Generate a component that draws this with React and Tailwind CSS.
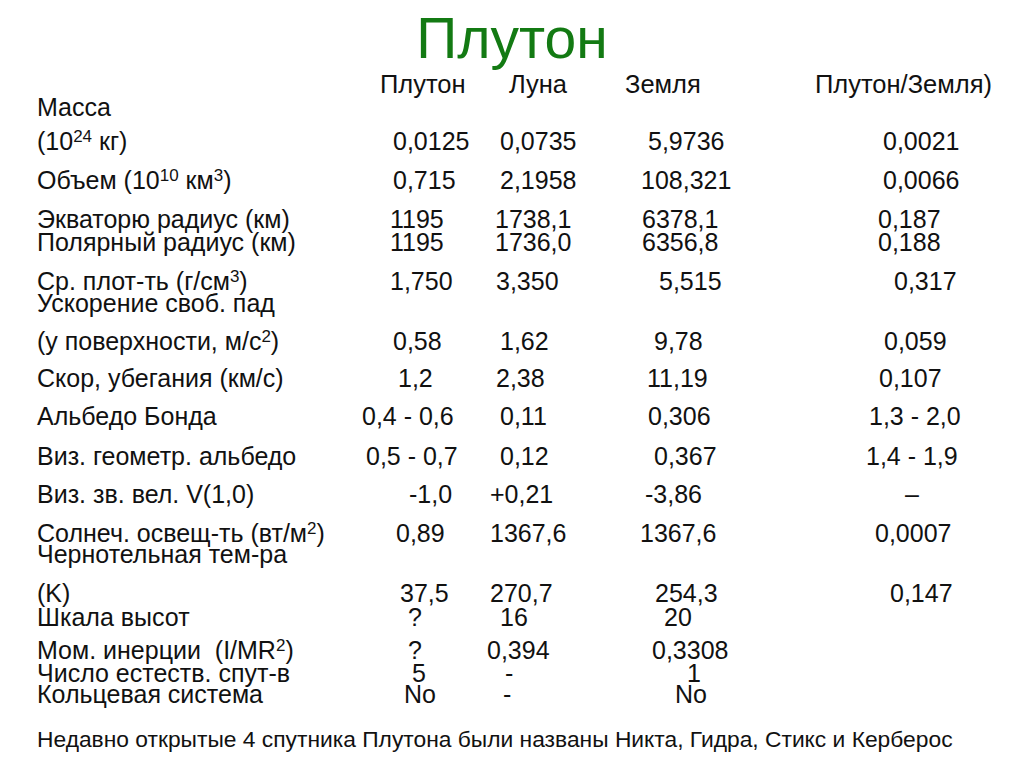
import React from 'react';

function Row({ h, label, cells }) {
  return (
    <div className={`grid grid-cols-[318px_130px_135px_180px_200px] items-start leading-[24px] ${h}`}>
      <div className="whitespace-nowrap">{label}</div>
      {cells.map((c, i) => (
        <div key={i} className={`whitespace-nowrap ${c[0]}`}>{c[1]}</div>
      ))}
    </div>
  );
}

function Sup({ children }) {
  return <sup className="text-[17px]">{children}</sup>;
}

export default function App() {
  return (
    <div className="w-[1024px] h-[767px] bg-white text-[#111] font-['Liberation_Sans',Arial,sans-serif] overflow-hidden">
      <div className="h-[72px] pt-[10px] text-center text-[57px] leading-[57px] text-[#137a13]">Плутон</div>
      <div className="pl-[37px] text-[25px]">
        <Row h="h-[23px] text-[25.5px]" label="" cells={[['pl-[25px]', 'Плутон'], ['pl-[24px]', 'Луна'], ['pl-[5px]', 'Земля'], ['pl-[15px]', 'Плутон/Земля)']]} />
        <Row h="h-[34px]" label="Масса" cells={[]} />
        <Row h="h-[39px]" label={<>(10<Sup>24</Sup> кг)</>} cells={[['pl-[38px]', '0,0125'], ['pl-[15px]', '0,0735'], ['pl-[28px]', '5,9736'], ['pl-[83px]', '0,0021']]} />
        <Row h="h-[39px]" label={<>Объем (10<Sup>10</Sup> км<Sup>3</Sup>)</>} cells={[['pl-[38px]', '0,715'], ['pl-[15px]', '2,1958'], ['pl-[21px]', '108,321'], ['pl-[83px]', '0,0066']]} />
        <Row h="h-[23px]" label="Экваторю радиус (км)" cells={[['pl-[35px]', '1195'], ['pl-[10px]', '1738,1'], ['pl-[22px]', '6378,1'], ['pl-[78px]', '0,187']]} />
        <Row h="h-[39px]" label="Полярный радиус (км)" cells={[['pl-[35px]', '1195'], ['pl-[10px]', '1736,0'], ['pl-[22px]', '6356,8'], ['pl-[78px]', '0,188']]} />
        <Row h="h-[22px]" label={<>Ср. плот-ть (г/см<Sup>3</Sup>)</>} cells={[['pl-[35px]', '1,750'], ['pl-[11px]', '3,350'], ['pl-[39px]', '5,515'], ['pl-[94px]', '0,317']]} />
        <Row h="h-[38px]" label="Ускорение своб. пад" cells={[]} />
        <Row h="h-[37px]" label={<>(у поверхности, м/с<Sup>2</Sup>)</>} cells={[['pl-[38px]', '0,58'], ['pl-[15px]', '1,62'], ['pl-[34px]', '9,78'], ['pl-[84px]', '0,059']]} />
        <Row h="h-[38px]" label="Скор, убегания (км/с)" cells={[['pl-[43px]', '1,2'], ['pl-[11px]', '2,38'], ['pl-[27px]', '11,19'], ['pl-[79px]', '0,107']]} />
        <Row h="h-[40px]" label="Альбедо Бонда" cells={[['pl-[7px]', '0,4 - 0,6'], ['pl-[15px]', '0,11'], ['pl-[28px]', '0,306'], ['pl-[69px]', '1,3 - 2,0']]} />
        <Row h="h-[38px]" label="Виз. геометр. альбедо" cells={[['pl-[11px]', '0,5 - 0,7'], ['pl-[15px]', '0,12'], ['pl-[34px]', '0,367'], ['pl-[66px]', '1,4 - 1,9']]} />
        <Row h="h-[39px]" label="Виз. зв. вел. V(1,0)" cells={[['pl-[54px]', '-1,0'], ['pl-[5px]', '+0,21'], ['pl-[25px]', '-3,86'], ['pl-[105px]', '–']]} />
        <Row h="h-[21px]" label={<>Солнеч. освещ-ть (вт/м<Sup>2</Sup>)</>} cells={[['pl-[41px]', '0,89'], ['pl-[5px]', '1367,6'], ['pl-[20px]', '1367,6'], ['pl-[75px]', '0,0007']]} />
        <Row h="h-[39px]" label="Чернотельная тем-ра" cells={[]} />
        <Row h="h-[24px]" label="(K)" cells={[['pl-[45px]', '37,5'], ['pl-[5px]', '270,7'], ['pl-[35px]', '254,3'], ['pl-[90px]', '0,147']]} />
        <Row h="h-[33px]" label="Шкала высот" cells={[['pl-[53px]', '?'], ['pl-[15px]', '16'], ['pl-[44px]', '20']]} />
        <Row h="h-[23px]" label={<>Мом. инерции&nbsp; (I/MR<Sup>2</Sup>)</>} cells={[['pl-[53px]', '?'], ['pl-[2px]', '0,394'], ['pl-[32px]', '0,3308']]} />
        <Row h="h-[21px]" label="Число естеств. спут-в" cells={[['pl-[57px]', '5'], ['pl-[20px]', '-'], ['pl-[67px]', '1']]} />
        <Row h="h-[46px]" label="Кольцевая система" cells={[['pl-[49px]', 'No'], ['pl-[18px]', '-'], ['pl-[55px]', 'No']]} />
        <div className="text-[22.8px] leading-[23px] whitespace-nowrap">
          Недавно открытые 4 спутника Плутона были названы Никта, Гидра, Стикс и Керберос
        </div>
      </div>
    </div>
  );
}
